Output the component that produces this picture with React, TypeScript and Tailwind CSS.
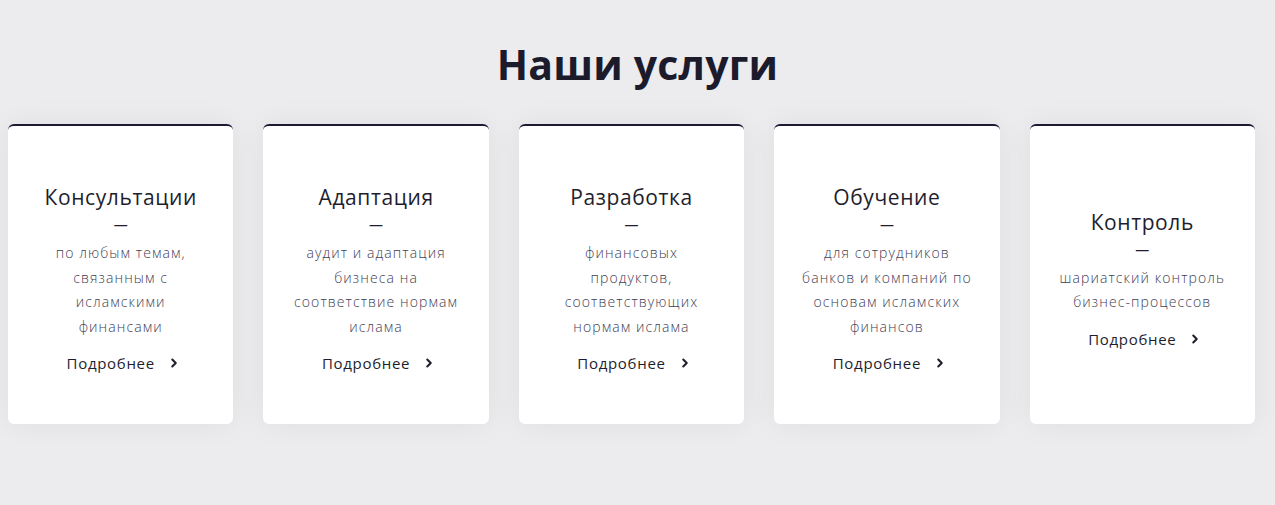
import { ChevronRight } from "lucide-react";

const SERVICES = [
  { title: "Консультации", lines: ["по любым темам,", "связанным с", "исламскими", "финансами"] },
  { title: "Адаптация", lines: ["аудит и адаптация", "бизнеса на", "соответствие нормам", "ислама"] },
  { title: "Разработка", lines: ["финансовых", "продуктов,", "соответствующих", "нормам ислама"] },
  { title: "Обучение", lines: ["для сотрудников", "банков и компаний по", "основам исламских", "финансов"] },
  { title: "Контроль", lines: ["шариатский контроль", "бизнес-процессов"] },
];

export default function App() {
  return (
    <div
      className="min-h-[505px] w-full bg-[#ececef] pt-[38px]"
      style={{ fontFamily: '"Open Sans", "Noto Sans", sans-serif' }}
    >
      <h2 className="text-center text-[41px] font-bold leading-[52px] tracking-[0.2px] text-[#1b1b2c]">Наши услуги</h2>

      <div className="mt-[34px] grid grid-cols-5 gap-[30px] pl-[8px] pr-[20px]">
        {SERVICES.map(service => (
          <div
            key={service.title}
            className="flex h-[300px] flex-col items-center justify-center rounded-[6px] border-t-2 border-[#1c1b33] bg-white pt-[8px] text-center shadow-[0_0_30px_rgba(0,0,0,0.06)]"
          >
            <div className="text-[21px] leading-[28px] tracking-[0.6px] text-[#1e1e2e]">{service.title}</div>
            <div className="mt-[4px] text-[14px] leading-[20px] text-[#1e1e2e]">—</div>
            <div className="mt-[6px] text-[14px] font-light leading-[24.5px] tracking-[1.1px] text-[#3f3e55]">
              {service.lines.map(line => (
                <div key={line}>{line}</div>
              ))}
            </div>
            <a href="#" className="mt-[12px] ml-[6px] flex items-center gap-[12px] text-[15px] leading-[24px] tracking-[0.7px] text-[#1e1e2e]">
              Подробнее
              <ChevronRight className="h-[14px] w-[14px]" strokeWidth={3.5} />
            </a>
          </div>
        ))}
      </div>
    </div>
  );
}
